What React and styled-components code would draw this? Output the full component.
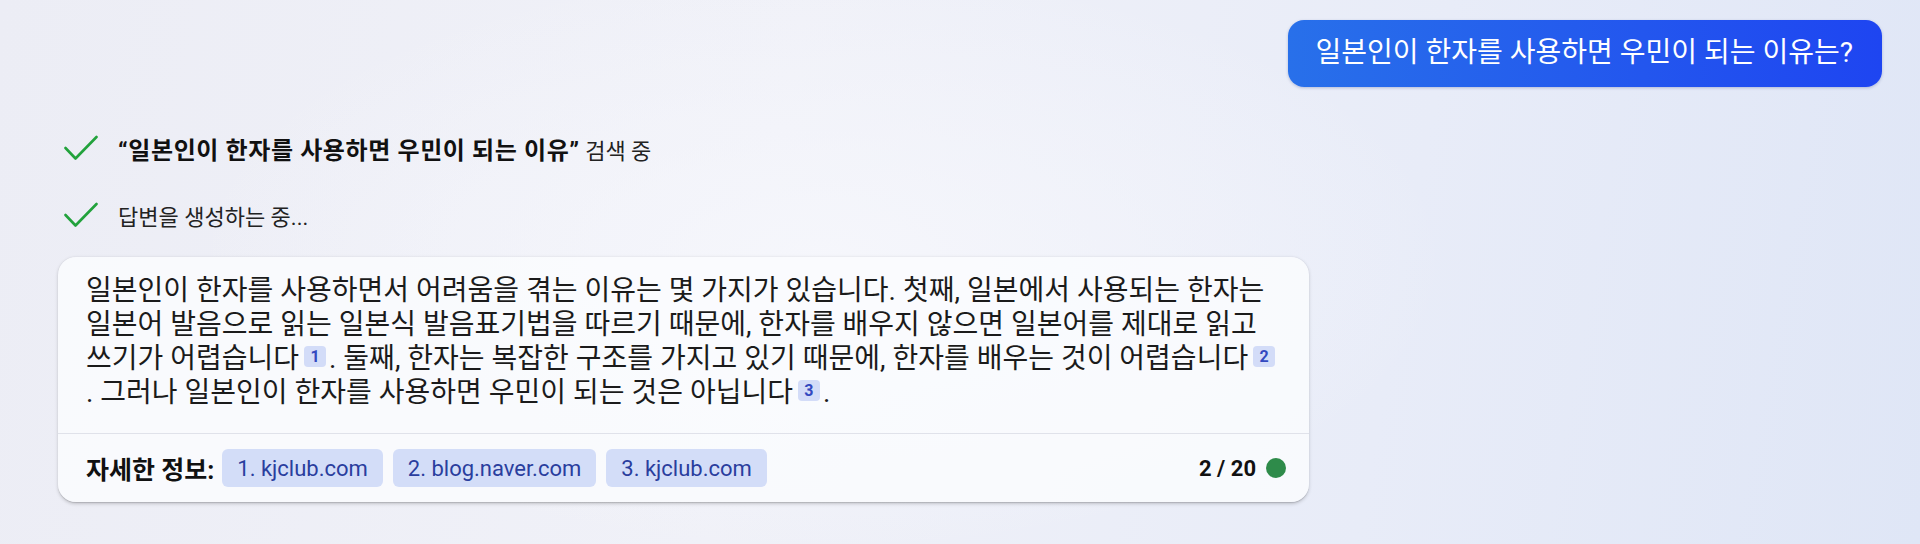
import React from 'react';
import styled, { createGlobalStyle } from 'styled-components';

// styled-components_________________________________

const GlobalStyle = createGlobalStyle`
html, body {
    margin: 0;
    padding: 0;
    height: 544px;
    overflow: hidden;
}
body {
    font-family: Roboto, "Noto Sans CJK KR", sans-serif;
    color: #1a1a1a;
    background:
        radial-gradient(ellipse 900px 420px at 820px 260px, rgba(246, 247, 252, 0.9), rgba(246, 247, 252, 0) 70%),
        linear-gradient(100deg, #ecedf5 0%, #f0f1f8 40%, #e8ecf8 72%, #dfe6f6 100%);
}`;

const Page = styled.div`
padding: 20px 38px 0 58px;
box-sizing: border-box;`;

const UserRow = styled.div`
display: flex;
justify-content: flex-end;`;

const Bubble = styled.div`
background: linear-gradient(90deg, #2870ea 0%, #2356ee 60%, #1e45f1 100%);
color: #ffffff;
font-size: 28px;
line-height: 34px;
padding: 16px 29px 17px 28px;
border-radius: 16px;
box-shadow: 0 1px 3px rgba(20, 40, 120, 0.25);`;

const Steps = styled.div`
display: flex;
flex-direction: column;
gap: 23px;
margin-top: 39px;`;

const Step = styled.div`
display: flex;
align-items: center;
gap: 20px;
height: 44px;
padding-left: 6px;
font-size: 22px;
color: #222;`;

const Strong = styled.b`
font-size: 24px;
font-weight: 700;
letter-spacing: 0.6px;
color: #111;`;

const Card = styled.div`
width: 1251px;
margin-top: 20px;
background: rgba(250, 251, 254, 0.85);
border-radius: 18px;
box-shadow: 0 0.3px 0.9px rgba(0, 0, 0, 0.12), 0 1.6px 3.6px rgba(0, 0, 0, 0.18);`;

const Body = styled.p`
margin: 0;
padding: 17px 26px 23px 28px;
font-size: 28px;
line-height: 34px;
color: #1b1b1b;`;

const Cite = styled.span`
display: inline-flex;
align-items: center;
justify-content: center;
vertical-align: top;
margin: 4px 3px 0 5px;
width: 22px;
height: 21px;
border-radius: 4px;
background: #d3dcf8;
color: #3349c0;
font-size: 16px;
font-weight: 700;
line-height: 1;`;

const Footer = styled.div`
display: flex;
align-items: center;
gap: 10px;
border-top: 1px solid #e0e2ea;
padding: 15px 23px 15px 28px;`;

const Label = styled.span`
font-size: 25px;
font-weight: 700;
color: #111;
margin-right: -2px;`;

const Chip = styled.a`
display: flex;
align-items: center;
height: 38px;
padding: 0 15px;
border-radius: 6px;
background: #d3ddf8;
color: #2a3e9e;
font-size: 22px;
text-decoration: none;`;

const Counter = styled.div`
margin-left: auto;
display: flex;
align-items: center;
gap: 10px;
font-size: 22px;
font-weight: 700;
color: #111;`;

const Dot = styled.span`
width: 20px;
height: 20px;
border-radius: 50%;
background: #2e8b4a;`;

// components_________________________________

function Check() {
    return (
        <svg width="34" height="26" viewBox="0 0 34 26" fill="none">
            <polyline points="1.5,13 11.5,23.5 32.5,2" stroke="#22a23c" strokeWidth="2.6" strokeLinecap="round" strokeLinejoin="round" />
        </svg>
    );
}

const sources = ['1. kjclub.com', '2. blog.naver.com', '3. kjclub.com'];

function App() {
    return (
        <Page>
            <GlobalStyle />
            <UserRow>
                <Bubble>일본인이 한자를 사용하면 우민이 되는 이유는?</Bubble>
            </UserRow>
            <Steps>
                <Step>
                    <Check />
                    <span><Strong>“일본인이 한자를 사용하면 우민이 되는 이유”</Strong> 검색 중</span>
                </Step>
                <Step>
                    <Check />
                    <span>답변을 생성하는 중...</span>
                </Step>
            </Steps>
            <Card>
                <Body>
                    일본인이 한자를 사용하면서 어려움을 겪는 이유는 몇 가지가 있습니다. 첫째, 일본에서 사용되는 한자는 일본어 발음으로 읽는 일본식 발음표기법을 따르기 때문에, 한자를 배우지 않으면 일본어를 제대로 읽고 쓰기가 어렵습니다<Cite>1</Cite>{'\u200B'}. 둘째, 한자는 복잡한 구조를 가지고 있기 때문에, 한자를 배우는 것이 어렵습니다<Cite>2</Cite>{'\u200B'}. 그러나 일본인이 한자를 사용하면 우민이 되는 것은 아닙니다<Cite>3</Cite>{'\u200B'}.
                </Body>
                <Footer>
                    <Label>자세한 정보:</Label>
                    {sources.map((s) => (
                        <Chip key={s} href="#">{s}</Chip>
                    ))}
                    <Counter>
                        2 / 20
                        <Dot />
                    </Counter>
                </Footer>
            </Card>
        </Page>
    );
}

export default App;
